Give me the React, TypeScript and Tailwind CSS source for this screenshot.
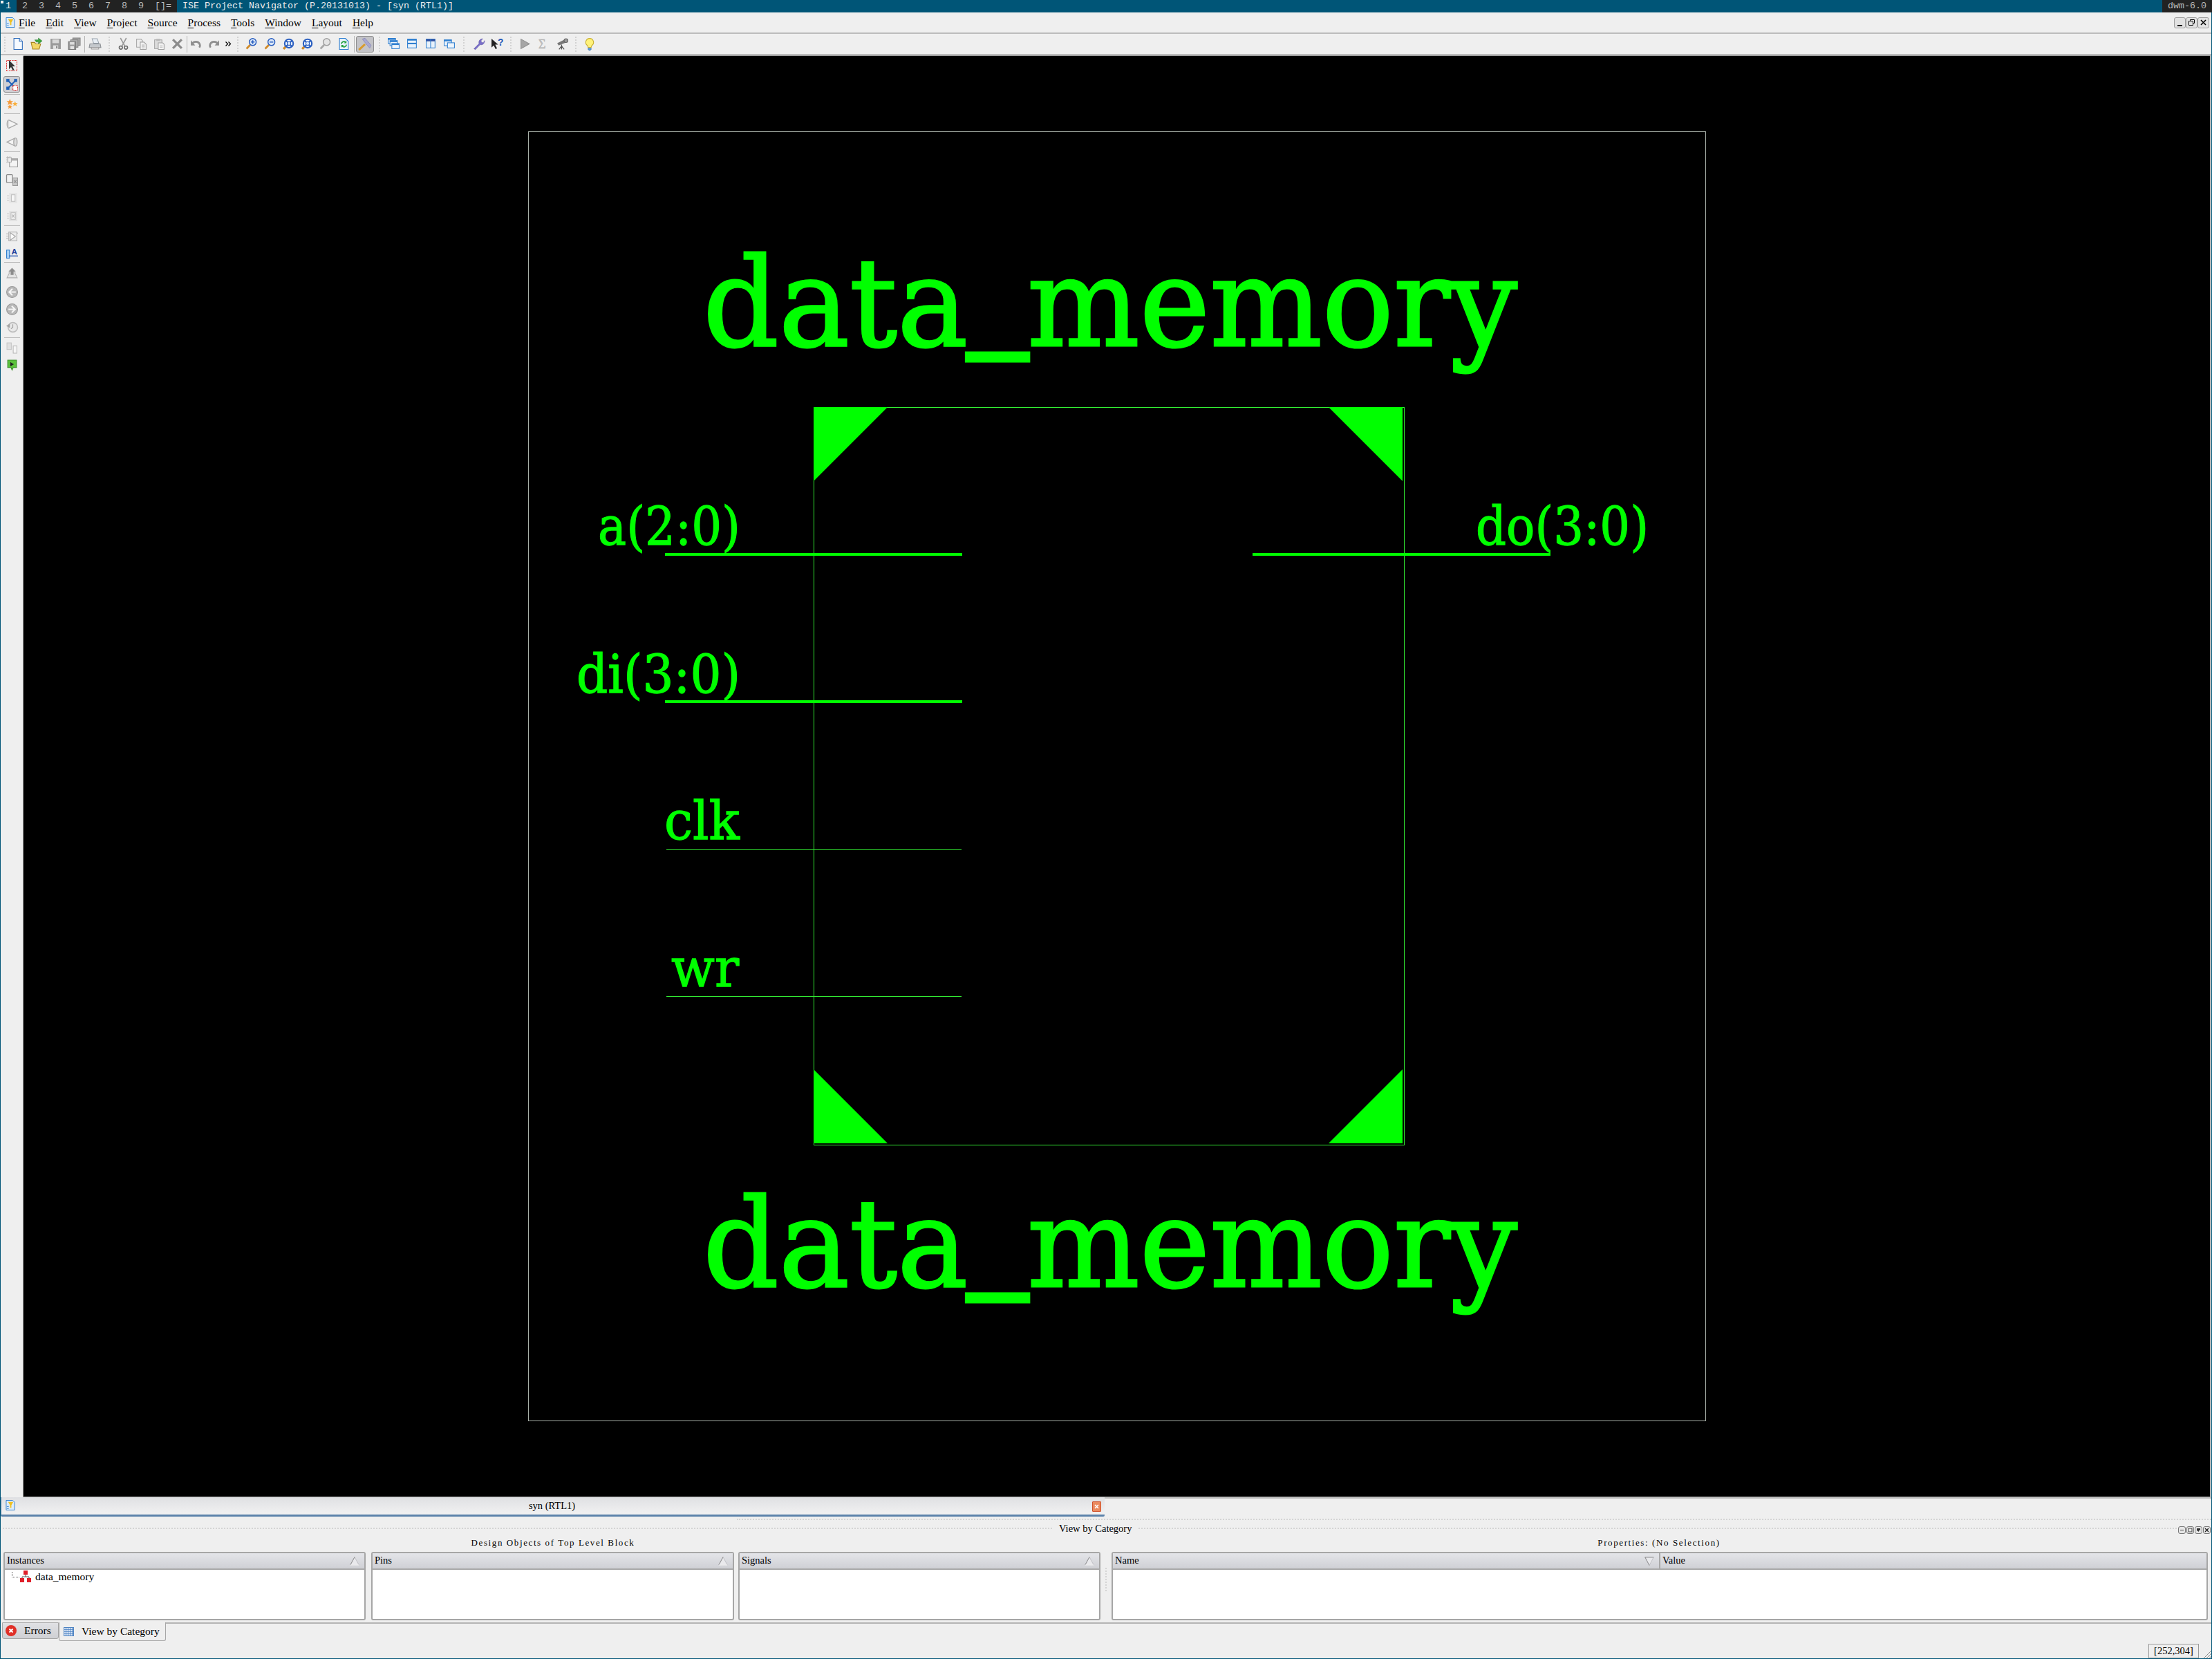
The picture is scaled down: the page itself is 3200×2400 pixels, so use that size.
import React from 'react';

const serif = { fontFamily: '"Liberation Serif", serif' };

const S: React.FC<{ s?: number; children: React.ReactNode }> = ({ s = 17, children }) => (
  <svg width={s} height={s} viewBox="0 0 16 16" className="shrink-0 overflow-visible">
    {children}
  </svg>
);

// top toolbar icons
const IconNew = () => (
  <S><path d="M2 .5h7.500l4 4v11H2z" fill="#f6faff" stroke="#2f6dbb" /><path d="M9.500.5v4h4" fill="#d5e4f7" stroke="#2f6dbb" /></S>
);
const IconOpen = () => (
  <S>
    <path d="M0 6h5l1 2h7l-2 7H2z" fill="#f3d768" stroke="#a8841f" />
    <path d="M5 2.500h5V0l5 4-5 4V5.500H7z" fill="#3ca53c" stroke="#1f7a2a" strokeWidth=".5" />
  </S>
);
const IconSave = () => (
  <S><rect x="1" y="1" width="14" height="14" fill="#9a9a9a" /><rect x="3.500" y="2" width="9" height="5" fill="#d8d8d8" /><rect x="4.500" y="10" width="7" height="5" fill="#e4e4e4" /><rect x="8.500" y="11" width="2" height="3" fill="#888" /></S>
);
const IconSaveAll = () => (
  <S>
    <rect x="6" y="0" width="10" height="10" fill="#a8a8a8" stroke="#808080" />
    <rect x="3" y="2.500" width="10" height="10" fill="#b0b0b0" stroke="#808080" />
    <rect x="0" y="5" width="10" height="10.500" fill="#9a9a9a" stroke="#777" />
    <rect x="2" y="5.500" width="6" height="3.500" fill="#ddd" /><rect x="2.500" y="11" width="5" height="4" fill="#e4e4e4" />
  </S>
);
const IconPrint = () => (
  <S>
    <path d="M4 1h7l2 6H6z" fill="#e8eef4" stroke="#9aa4ae" />
    <path d="M1 8h14l1 5H0z" fill="#c4c8cc" stroke="#8a8e92" />
    <path d="M3 13h10v2H3z" fill="#eee" stroke="#9a9a9a" />
  </S>
);
const IconCut = () => (
  <S>
    <path d="M4 0l6 11M12 0L6 11" stroke="#9a9a9a" strokeWidth="1.500" fill="none" />
    <circle cx="4.500" cy="13" r="2.200" fill="none" stroke="#6a6a6a" strokeWidth="1.500" />
    <circle cx="11.500" cy="13" r="2.200" fill="none" stroke="#6a6a6a" strokeWidth="1.500" />
  </S>
);
const IconCopy = () => (
  <S>
    <path d="M1.500 1.500h6l2 2v9h-8z" fill="#eee" stroke="#a8a8a8" />
    <path d="M6.500 5.500h5l3 3v7h-8z" fill="#f0f0f0" stroke="#a0a0a0" />
    <path d="M8.500 9.500h4M8.500 11.500h4M8.500 13.500h4" stroke="#bbb" />
  </S>
);
const IconPaste = () => (
  <S>
    <rect x="1.500" y="2.500" width="10" height="12" fill="#dcdcdc" stroke="#a8a8a8" />
    <rect x="4" y="1" width="5" height="3" fill="#bbb" />
    <path d="M6.500 6.500h6l2 2v7h-8z" fill="#f2f2f2" stroke="#a0a0a0" />
    <path d="M8.500 10.500h4M8.500 12.500h4" stroke="#bbb" />
  </S>
);
const IconDelete = () => (
  <S><path d="M2 2l12 12M14 2L2 14" stroke="#8c8c8c" strokeWidth="3" /></S>
);
const IconUndo = () => (
  <S>
    <path d="M3 7c4-3.500 10-2 10.500 3 .1 1-.3 2-1 3" fill="none" stroke="#8e8e8e" strokeWidth="2.500" />
    <path d="M1 3v7h6z" fill="#8e8e8e" />
  </S>
);
const IconRedo = () => (
  <S>
    <path d="M13 7C9 3.500 3 5 2.500 10c-.1 1 .3 2 1 3" fill="none" stroke="#8e8e8e" strokeWidth="2.500" />
    <path d="M15 3v7H9z" fill="#8e8e8e" />
  </S>
);
const IconMore = () => (
  <svg width="9" height="7" viewBox="0 0 9 7" className="shrink-0">
    <path d="M.5.5l3 3-3 3M4.500.5l3 3-3 3" fill="none" stroke="#000" strokeWidth="1.300" />
  </svg>
);
const Mag: React.FC<{ glass?: string; ring?: string; handle?: string; mark?: React.ReactNode }> = ({ glass = '#dbe8f8', ring = '#2a5fc0', handle = '#d08a28', mark }) => (
  <S>
    <path d="M6.500 9.500L1.500 14.500" stroke={handle} strokeWidth="2.600" />
    <circle cx="10" cy="5.500" r="4.700" fill={glass} stroke={ring} strokeWidth="1.400" />
    {mark}
  </S>
);
const IconZoomIn = () => <Mag mark={<path d="M7.500 5.500h5M10 3v5" stroke="#2a5fc0" strokeWidth="1.400" />} />;
const IconZoomOut = () => <Mag mark={<path d="M7.500 5.500h5" stroke="#2a5fc0" strokeWidth="1.400" />} />;
const IconZoomFit = () => (
  <S>
    <path d="M4 12l-3 3" stroke="#d08a28" strokeWidth="3" />
    <circle cx="8.500" cy="7.500" r="5.800" fill="#fff" stroke="#2a5fc0" strokeWidth="2" />
    <path d="M4.500 3.500l8 8M12.500 3.500l-8 8" stroke="#2a5fc0" strokeWidth="2" />
    <circle cx="8.500" cy="7.500" r="2.500" fill="#dbe8f8" stroke="#2a5fc0" />
  </S>
);
const IconZoomGray = () => <Mag glass="#e4e4e4" ring="#a0a0a0" handle="#a8a8a8" />;
const IconRefreshDoc = () => (
  <S>
    <path d="M2 .5h8l4 4v11H2z" fill="#e8f2fc" stroke="#2f7fd0" />
    <path d="M4.500 8a3.500 3.500 0 0 1 6-2M11.500 9a3.500 3.500 0 0 1-6 2" fill="none" stroke="#27a243" strokeWidth="1.600" />
    <path d="M11.500 3.500v3.500H8zM4.500 13V9.500H8z" fill="#27a243" />
  </S>
);
const IconHammer = () => (
  <S s={20}>
    <path d="M1 14.500L8 8" stroke="#d89a2c" strokeWidth="2.400" />
    <path d="M5 2l3-1 7 8-1.500 3.500L8 6z" fill="#a8a8d0" stroke="#8484b4" strokeWidth=".6" />
  </S>
);
const IconWinsCascade = () => (
  <S>
    <rect x=".5" y=".5" width="10" height="7" fill="#eef5fc" stroke="#2f7fd0" /><rect x=".5" y=".5" width="10" height="2" fill="#2f7fd0" />
    <rect x="3" y="3.500" width="10" height="7" fill="#eef5fc" stroke="#2f7fd0" /><rect x="3" y="3.500" width="10" height="2" fill="#2f7fd0" />
    <rect x="5.500" y="7.500" width="10" height="7" fill="#eef5fc" stroke="#2f7fd0" /><rect x="5.500" y="7.500" width="10" height="2" fill="#2f7fd0" />
  </S>
);
const IconWinsStack = () => (
  <S>
    <rect x="1.500" y="1.500" width="12" height="12" fill="#e8f2fb" stroke="#2f7fd0" />
    <rect x="1.500" y="1.500" width="12" height="2" fill="#2f7fd0" /><path d="M1.500 7.500h12" stroke="#2f7fd0" strokeWidth="2" />
  </S>
);
const IconWinsSide = () => (
  <S>
    <rect x="1.500" y="1.500" width="12" height="12" fill="#e8f2fb" stroke="#2f7fd0" />
    <rect x="1.500" y="1.500" width="12" height="3" fill="#2f50a0" /><path d="M7.500 1.500v12" stroke="#2f7fd0" />
  </S>
);
const IconWinsTwo = () => (
  <S>
    <rect x=".5" y="2.500" width="10" height="8" fill="#eef5fc" stroke="#2f7fd0" /><rect x=".5" y="2.500" width="10" height="2" fill="#2f7fd0" />
    <rect x="5" y="6.500" width="9.500" height="7" fill="#eef5fc" stroke="#2f7fd0" />
  </S>
);
const IconWrench = () => (
  <S>
    <path d="M1.500 14.500l7-7c-1-3 1-6.500 5-6.500l-2.500 2.800 1 2 2.300.7L16 3.500c.2 4-3 6.500-6 5.500l-6.500 6.800z" fill="#7a70c8" stroke="#5a50a8" strokeWidth=".5" />
  </S>
);
const IconHelp = () => (
  <S>
    <path d="M1 1v12l3-3 2.500 5 2-1-2.500-5h4z" fill="#222" />
    <text x="9.500" y="10.500" fontSize="13" fontWeight="700" fill="#2458b8" style={{ fontFamily: '"Liberation Sans", sans-serif' }}>?</text>
  </S>
);
const IconPlay = () => (
  <S><path d="M2.500 1.500L14 8 2.500 14.500z" fill="#a6a6a6" stroke="#8f8f8f" /></S>
);
const IconSigma = () => (
  <S>
    <text x="1" y="14" fontSize="17" fill="#c4c4c4" stroke="#a8a8a8" strokeWidth=".4" style={serif}>Σ</text>
  </S>
);
const IconScope = () => (
  <S>
    <path d="M1 7l10-5 2 4-10 4z" fill="#777" />
    <circle cx="13" cy="3.500" r="2.600" fill="#999" stroke="#666" />
    <path d="M7 9v3M7 11l-3.500 4.500M7 11l3.500 4.500M7 11v4.500" stroke="#555" strokeWidth="1.200" fill="none" />
  </S>
);
const IconBulb = () => (
  <S s={18}>
    <path d="M8 .5a5 5 0 0 1 3 9c-.7.7-1 1.500-1 2.500H6c0-1-.3-1.800-1-2.500a5 5 0 0 1 3-9z" fill="#fff27a" stroke="#c8b030" />
    <path d="M6 13h4v1.500L8.800 16H7.200L6 14.500z" fill="#5a9ad8" stroke="#3a70a8" strokeWidth=".5" />
  </S>
);
const IconDoc = () => (
  <S s={15}>
    <path d="M1 .5h10l3 3v12H1z" fill="#dcecfa" stroke="#2f7fd0" />
    <path d="M4 3h8L9 8v4H7V8z" fill="#f0c020" />
    <path d="M2 10h3M2 13h3" stroke="#2f7fd0" />
  </S>
);

// left toolbar icons
const IconSelect = () => (
  <S s={16}>
    <rect x=".5" y=".5" width="15" height="15" fill="none" stroke="#e02020" strokeDasharray="1.500 1" />
    <path d="M4 0v13l3-3 2.500 5 2-1-2.500-5h4z" fill="#333" />
  </S>
);
const IconExpand = () => (
  <S s={18}>
    <path d="M4 4l8 8M12 4l-8 8" stroke="#1f5fb8" strokeWidth="1.600" />
    <rect x="1" y="1" width="4" height="4" fill="#1f5fb8" /><rect x="11" y="1" width="4" height="4" fill="#1f5fb8" /><rect x="1" y="11" width="4" height="4" fill="#1f5fb8" />
    <rect x="9.500" y="9.500" width="6" height="6" fill="#fff" stroke="#e02020" strokeDasharray="1.200 .8" />
  </S>
);
const IconStars = () => (
  <S>
    <path d="M5 1l1.200 3H9.500L7 6.200 8 9.500 5 7.600 2 9.500l1-3.300L.5 4h3.300zM5 8l1 2.300h2.500L6.600 12l.7 2.700L5 13.200 2.700 14.700l.7-2.700L1.500 10.300H4z" fill="#f59a38" />
    <path d="M12 4l1 2.500h2.700l-2.100 1.700.8 2.800L12 9.400 9.600 11l.8-2.800-2.100-1.700H11z" fill="#f8b040" />
  </S>
);
const IconGateR = () => (
  <S>
    <ellipse cx="3.500" cy="8" rx="2.300" ry="5.500" fill="#ddd" stroke="#a8a8a8" strokeWidth="1.300" />
    <path d="M4 2.800L15 8 4 13.200" fill="#f4f4f4" stroke="#a8a8a8" strokeWidth="1.300" />
  </S>
);
const IconGateL = () => (
  <S>
    <path d="M12 2.800L1 8 12 13.200" fill="#f4f4f4" stroke="#a8a8a8" strokeWidth="1.300" />
    <ellipse cx="12.500" cy="8" rx="2.300" ry="5.500" fill="#ddd" stroke="#a8a8a8" strokeWidth="1.300" />
  </S>
);
const IconChipWin = () => (
  <S>
    <rect x="4.500" y="3.500" width="11" height="11" fill="#f4f4f4" stroke="#999" /><rect x="4.500" y="3.500" width="11" height="2.500" fill="#aaa" />
    <path d="M0 2h4M0 5h4M0 8h4M2 0v2M5 0v2" stroke="#b4b4b4" /><rect x="2" y="2" width="5" height="6" fill="#eee" stroke="#aaa" />
  </S>
);
const IconBoxes = () => (
  <S>
    <rect x=".5" y=".5" width="8" height="11" rx="1" fill="#f2f2f2" stroke="#8a8a8a" strokeWidth="1.200" />
    <rect x="9" y="5" width="6.500" height="10.500" fill="#c8c8c8" stroke="#9a9a9a" />
    <path d="M10.500 8l3.500 4M14 8l-3.500 4" stroke="#888" />
  </S>
);
const IconPinsA = () => (
  <S>
    <rect x="4" y="1" width="11" height="14" fill="#e6e6e6" />
    <rect x="7" y="3.500" width="5" height="9" fill="#f6f6f6" stroke="#c0c0c0" />
    <path d="M1 5h3M1 8h3M1 11h3" stroke="#c4c4c4" />
  </S>
);
const IconPinsB = () => (
  <S>
    <rect x="4" y="1" width="11" height="14" fill="#e2e2e2" />
    <rect x="6.500" y="3.500" width="6" height="9" fill="#f2f2f2" stroke="#c0c0c0" />
    <path d="M8 6l3 4M11 6l-3 4" stroke="#b4b4b4" />
    <path d="M1 5h3M1 8h3M1 11h3" stroke="#c4c4c4" />
  </S>
);
const IconBuf = () => (
  <S>
    <rect x="3.500" y="2.500" width="11" height="12" fill="#ececec" stroke="#b0b0b0" />
    <path d="M5.500 3.500l7 5-7 5z" fill="#fafafa" stroke="#a4a4a4" />
    <path d="M0 5h3M0 8h3M0 11h3M14 4h2" stroke="#b4b4b4" />
  </S>
);
const IconTextA = () => (
  <S>
    <rect x=".5" y="4.500" width="4" height="11" fill="#a8d0f4" stroke="#2f7fd0" />
    <path d="M4 12.500h12" stroke="#1f4fb0" strokeWidth="1.200" />
    <text x="7" y="10.500" fontSize="11" fontWeight="700" fill="#1f3f9c" style={{ fontFamily: '"Liberation Sans", sans-serif' }}>A</text>
  </S>
);
const IconUpHouse = () => (
  <S>
    <path d="M8 1l4 4v3l3 6H1l3-6V5z" fill="#e4e4e4" stroke="#b0b0b0" />
    <path d="M8 1l4 4.500h-2V10H6V5.500H4z" fill="#8c8c8c" />
  </S>
);
const Round: React.FC<{ dir: 'l' | 'r' }> = ({ dir }) => (
  <S>
    <circle cx="8" cy="8" r="7.500" fill="#b8b8b8" stroke="#9a9a9a" />
    <path d={dir === 'l' ? 'M8.500 3.500L4 8l4.500 4.500M4.500 8H13' : 'M7.500 3.500L12 8l-4.500 4.500M11.500 8H3'} fill="none" stroke="#f4f4f4" strokeWidth="2" />
  </S>
);
const IconClock = () => (
  <S>
    <circle cx="9" cy="8" r="6.500" fill="#e8e8e8" stroke="#bdbdbd" strokeWidth="1.500" />
    <path d="M9 4v4l-2.500 2" stroke="#999" fill="none" />
    <path d="M0 6l5-3v6z" fill="#a4a4a4" />
  </S>
);
const IconTwoBoxes = () => (
  <S>
    <rect x="1" y="1" width="6" height="9" fill="#e0e0e0" stroke="#c8c8c8" />
    <rect x="9.500" y="5" width="5" height="10" fill="#f6f6f6" stroke="#b8b8b8" />
  </S>
);
const IconPinGreen = () => (
  <S>
    <path d="M2 1h12v10H9.500L8 14.500 6.500 11H2z" fill="#5cc23c" stroke="#3a8f28" />
    <path d="M5.500 3.500l5 3-5 3z" fill="#222" />
  </S>
);

// little widgets
const Grip: React.FC<{ className: string }> = ({ className }) => (
  <div className={`flex h-full shrink-0 items-center justify-center ${className}`}>
    <div className="h-[22px] w-0 border-l-2 border-dotted border-[#d2d2d2]" />
  </div>
);
const VSep: React.FC<{ className: string }> = ({ className }) => (
  <div className={`flex h-full shrink-0 items-center justify-center ${className}`}>
    <div className="h-[24px] w-px bg-[#b4b4b4]" />
  </div>
);
const T: React.FC<{ className?: string; children: React.ReactNode }> = ({ className = 'w-[27px]', children }) => (
  <div className={`flex h-full shrink-0 items-center justify-center ${className}`}>{children}</div>
);
const L: React.FC<{ className?: string; children?: React.ReactNode }> = ({ className = 'h-[26px]', children }) => (
  <div className={`flex w-full shrink-0 items-center justify-center ${className}`}>{children}</div>
);
const LSep: React.FC<{ className?: string }> = ({ className = 'h-[3px]' }) => (
  <div className={`flex w-full shrink-0 items-center justify-center ${className}`}>
    <div className="h-px w-[23px] bg-[#b8b8b8]" />
  </div>
);
const SortUp = () => (
  <svg width="14" height="13" viewBox="0 0 14 13" className="shrink-0"><path d="M7 .5L.8 12h12.400z" fill="#e9e9ec" stroke="#b8b8bc" strokeWidth=".8" /><path d="M7 .5L.8 12" stroke="#808080" fill="none" strokeWidth=".8" /><path d="M.8 12h12.400" stroke="#fff" /></svg>
);
const SortDown = () => (
  <svg width="14" height="13" viewBox="0 0 14 13" className="shrink-0"><path d="M.8.800h12.400L7 12.500z" fill="#e9e9ec" stroke="#b8b8bc" strokeWidth=".8" /><path d="M.8.800h12.400M.8.800L7 12.500" stroke="#808080" fill="none" strokeWidth=".8" /></svg>
);
const Header: React.FC<{ className?: string; children: React.ReactNode }> = ({ className = '', children }) => (
  <div className={`flex h-[24px] items-center justify-between border-b-2 border-[#a8a8a8] bg-gradient-to-b from-[#e4e5e9] to-[#cfd0d5] pl-[3px] pr-[7px] text-[14.500px] text-black ${className}`}>
    {children}
  </div>
);
const Box: React.FC<{ className: string; children: React.ReactNode }> = ({ className, children }) => (
  <div className={`h-[99px] shrink-0 overflow-hidden rounded-[3px] border-2 border-[#a6a6a6] bg-white ${className}`}>{children}</div>
);
const DockBtn: React.FC<{ children: React.ReactNode }> = ({ children }) => (
  <div className="flex h-[11px] w-[11px] items-center justify-center rounded-[3px] border border-[#777] bg-[#e6e6e6]">
    <svg width="7" height="7" viewBox="0 0 7 7">{children}</svg>
  </div>
);

const menus = [['F', 'ile'], ['E', 'dit'], ['V', 'iew'], ['P', 'roject'], ['S', 'ource'], ['P', 'rocess'], ['T', 'ools'], ['W', 'indow'], ['L', 'ayout'], ['H', 'elp']];
const tags = ['2', '3', '4', '5', '6', '7', '8', '9', '[]='];

const Title: React.FC<{ y: number }> = ({ y }) => (
  <text x="1017" y={y} textLength="1178" lengthAdjust="spacingAndGlyphs">
    data<tspan dy="-22" strokeWidth="9">_</tspan><tspan dy="22">memory</tspan>
  </text>
);

const Schematic = () => (
  <svg width="3163" height="2083" viewBox="34 81 3163 2083" className="block" style={{ fontFamily: '"DejaVu Serif", serif' }}>
    <rect x="764.500" y="190.500" width="1703" height="1865" fill="none" stroke="#a8b0a8" />
    <g fill="#00ff00" stroke="#00ff00" strokeWidth="3" fontSize="177">
      <Title y={500} />
      <Title y={1861} />
    </g>
    <rect x="1177.500" y="589.500" width="854" height="1067" fill="none" stroke="#33ee33" />
    <g fill="#00ff00">
      <path d="M1177 589h107l-107 107z" />
      <path d="M2029 589h-107l107 107z" />
      <path d="M1177 1654h107l-107-107z" />
      <path d="M2029 1654h-107l107-107z" />
    </g>
    <g fill="#00ff00" stroke="#00ff00" strokeWidth="1.300" fontSize="77">
      <text x="865" y="788" textLength="206" lengthAdjust="spacingAndGlyphs">a(2:0)</text>
      <text x="834" y="1002" textLength="237" lengthAdjust="spacingAndGlyphs">di(3:0)</text>
      <text x="961" y="1214" textLength="109" lengthAdjust="spacingAndGlyphs">clk</text>
      <text x="971" y="1427" textLength="98" lengthAdjust="spacingAndGlyphs">wr</text>
      <text x="2135" y="788" textLength="250" lengthAdjust="spacingAndGlyphs">do(3:0)</text>
    </g>
    <g fill="#00ff00">
      <rect x="962" y="800" width="430" height="4" />
      <rect x="962" y="1013" width="430" height="4" />
      <rect x="1812" y="800" width="431" height="4" />
    </g>
    <g fill="#33ee33">
      <rect x="964" y="1228" width="427" height="1" />
      <rect x="964" y="1441" width="427" height="1" />
    </g>
  </svg>
);

export default function App() {
  return (
    <div className="flex h-[2400px] w-[3200px] flex-col overflow-hidden bg-[#005577]" style={serif}>
      {/* dwm bar */}
      <div className="flex h-[18px] shrink-0 items-center text-[13.330px] leading-[18px]" style={{ fontFamily: '"Liberation Mono", monospace' }}>
        <div className="relative w-[24px] text-center text-[#eeeeee]">
          <span className="absolute left-px top-px size-[4px] bg-[#eeeeee]" />1
        </div>
        <div className="flex h-full bg-[#222222] text-[#bbbbbb]">
          {tags.map((t) => (
            <div key={t} className="px-[8px]">{t}</div>
          ))}
        </div>
        <div className="flex-1 pl-[8px] text-[#eeeeee]">ISE Project Navigator (P.20131013) - [syn (RTL1)]</div>
        <div className="h-full w-[72px] bg-[#222222] pl-[8px] text-[#bbbbbb]">dwm-6.0</div>
      </div>

      <div className="mx-px mb-px flex min-h-0 flex-1 flex-col bg-[#efefef] text-black">
        {/* menu bar */}
        <div className="flex h-[31px] shrink-0 items-center border-b-2 border-[#bcbcbc] text-[15.500px]">
          <div className="flex w-[26px] justify-center pl-[2px]">
            <IconDoc />
          </div>
          <div className="flex gap-[15px]">
            {menus.map(([a, b], i) => (
              <div key={i}><span className="underline decoration-1 underline-offset-2">{a}</span>{b}</div>
            ))}
          </div>
          <div className="ml-auto mr-[3px] flex">
            <div className="flex h-[16px] w-[17px] items-end justify-center rounded-[3px] border border-[#9e9e9e] bg-[#e2e2e2] pb-[2px]"><div className="h-[2px] w-[7px] bg-black" /></div>
            <div className="flex h-[16px] w-[17px] items-center justify-center rounded-[3px] border border-[#9e9e9e] bg-[#e2e2e2]">
              <svg width="9" height="9" viewBox="0 0 9 9"><path d="M2.500 2.500v-2h6v5h-2M.5 2.500h6v6h-6z" fill="none" stroke="#000" /></svg>
            </div>
            <div className="flex h-[16px] w-[17px] items-center justify-center rounded-[3px] border border-[#9e9e9e] bg-[#e2e2e2]">
              <svg width="9" height="9" viewBox="0 0 9 9"><path d="M1 1l7 7M8 1L1 8" stroke="#000" strokeWidth="1.600" /></svg>
            </div>
          </div>
        </div>

        {/* main toolbar */}
        <div className="flex h-[31px] shrink-0 items-center border-b-2 border-[#bcbcbc]">
          <Grip className="w-[11.500px]" />
          <T><IconNew /></T><T><IconOpen /></T><T><IconSave /></T><T><IconSaveAll /></T>
          <VSep className="w-[3px]" />
          <T><IconPrint /></T>
          <Grip className="w-[14px]" />
          <T><IconCut /></T><T className="w-[26px]"><IconCopy /></T><T className="w-[26px]"><IconPaste /></T><T className="w-[26px]"><IconDelete /></T>
          <VSep className="w-px" />
          <T className="w-[26px]"><IconUndo /></T><T className="w-[25px]"><IconRedo /></T><T className="w-[17px]"><IconMore /></T>
          <Grip className="w-[11px]" />
          <T><IconZoomIn /></T><T><IconZoomOut /></T><T><IconZoomFit /></T><T><IconZoomFit /></T><T className="w-[26px]"><IconZoomGray /></T><T className="w-[28px]"><IconRefreshDoc /></T>
          <VSep className="w-px" />
          <T className="w-[30px]">
            <div className="flex h-[24px] w-[26px] items-center justify-center rounded-[3px] border border-[#8e8e8e] bg-[#c4c4c8]"><IconHammer /></div>
          </T>
          <Grip className="w-[13px]" />
          <T><IconWinsCascade /></T><T><IconWinsStack /></T><T><IconWinsSide /></T><T><IconWinsTwo /></T>
          <Grip className="w-[15px]" />
          <T><IconWrench /></T><T className="w-[26px]"><IconHelp /></T>
          <Grip className="w-[14px]" />
          <T><IconPlay /></T><T><IconSigma /></T><T><IconScope /></T>
          <Grip className="w-[13px]" />
          <T><IconBulb /></T>
        </div>

        {/* tools + canvas */}
        <div className="flex min-h-0 flex-1">
          <div className="flex w-[32px] shrink-0 flex-col pt-[2px]">
            <L><IconSelect /></L>
            <L className="h-[28px]">
              <div className="flex h-[24px] w-[24px] items-center justify-center rounded-[3px] border border-[#8e8e8e] bg-[#cfcfd4]"><IconExpand /></div>
            </L>
            <LSep className="h-px" />
            <L><IconStars /></L>
            <LSep />
            <L><IconGateR /></L><L><IconGateL /></L>
            <LSep />
            <L><IconChipWin /></L><L><IconBoxes /></L><L><IconPinsA /></L><L><IconPinsB /></L>
            <LSep />
            <L><IconBuf /></L>
            <L className="h-[22px]"><IconTextA /></L>
            <LSep className="h-[6px]" />
            <L><IconUpHouse /></L>
            <L className="h-[28px]"><Round dir="l" /></L>
            <L className="h-[22px]"><Round dir="r" /></L>
            <L className="h-[30px]"><IconClock /></L>
            <LSep className="h-px" />
            <L className="h-[28px]"><IconTwoBoxes /></L>
            <L className="h-[22px]"><IconPinGreen /></L>
          </div>
          <div className="mr-px min-w-0 flex-1 overflow-hidden rounded-tl-[2px] border border-[#9a9a9a] bg-black">
            <Schematic />
          </div>
        </div>

        {/* document tab strip */}
        <div className="flex h-[29px] shrink-0">
          <div className="relative flex h-[28px] w-[1597px] shrink-0 items-center justify-center rounded-bl-[2px] rounded-br-[2px] border-b-[3px] border-l border-[#5c82aa] border-r-[#8a8a8a] bg-gradient-to-b from-[#dfe0e3] to-[#f2f2f2] text-[14.500px]">
            <div className="absolute left-[6px] top-[4px]">
              <IconDoc />
            </div>
            <div className="pr-[3px]">syn (RTL1)</div>
            <div className="absolute right-[5px] top-[6px] flex h-[15px] w-[13px] items-center justify-center rounded-[1px] border border-[#d0502a] bg-[#ea8a5e]">
              <svg width="7" height="7" viewBox="0 0 7 7"><path d="M1 1l5 5M6 1L1 6" stroke="#fff" strokeWidth="1.700" /></svg>
            </div>
          </div>
          <div className="h-[2px] flex-1 border-t-2 border-[#c0c0c0]" />
        </div>

        {/* dock handles */}
        <div className="h-[8px] shrink-0 pl-[1065px] pt-[2px]">
          <div className="border-t-2 border-dotted border-[#d4d4d4]" />
        </div>
        <div className="flex h-[16px] shrink-0 items-center text-[14.500px] leading-none">
          <div className="ml-[3px] w-[1518px] shrink-0 border-t-2 border-dotted border-[#d4d4d4]" />
          <div className="px-[10px]">View by Category</div>
          <div className="flex-1 border-t-2 border-dotted border-[#d4d4d4]" />
          <div className="mr-[1px] flex gap-[1px] pl-[2px] pt-[5px]">
            <DockBtn><path d="M1 3.500h5" stroke="#444" /></DockBtn>
            <DockBtn><rect x="1" y="1" width="5" height="5" fill="none" stroke="#444" /></DockBtn>
            <DockBtn><path d="M1 1h5v3H4v2L1 4z" fill="#333" /></DockBtn>
            <DockBtn><path d="M1 1l5 5M6 1L1 6" stroke="#222" strokeWidth="1.300" /></DockBtn>
          </div>
        </div>

        {/* panel titles */}
        <div className="flex h-[26px] shrink-0 pt-[3px] text-[13px] tracking-[1.600px]">
          <div className="w-[1600px] pr-[2px] text-center">Design Objects of Top Level Block</div>
          <div className="flex-1 text-center">Properties: (No Selection)</div>
        </div>

        {/* tables */}
        <div className="flex h-[99px] shrink-0 pl-[4px]">
          <Box className="w-[524px]">
            <Header>Instances<SortUp /></Header>
            <div className="flex h-[19px] items-center pl-[10px] text-[15.500px]">
              <div className="mb-[5px] h-[8px] w-[11px] border-b border-l border-dotted border-[#555]" />
              <svg width="16" height="17" viewBox="0 0 16 17" className="ml-px shrink-0">
                <path d="M8 5v4M3 11V9h10v2" stroke="#555" fill="none" />
                <rect x="5" y="0" width="6" height="6" fill="#e0202a" />
                <rect x="0" y="11" width="6" height="6" fill="#e0202a" />
                <rect x="10" y="11" width="6" height="6" fill="#e0202a" />
              </svg>
              <span className="ml-[6px]">data_memory</span>
            </div>
          </Box>
          <Box className="ml-[8px] w-[525px]">
            <Header>Pins<SortUp /></Header>
          </Box>
          <Box className="ml-[6px] w-[524px]">
            <Header>Signals<SortUp /></Header>
          </Box>
          <div className="flex w-[16px] shrink-0 items-center justify-center pb-[20px]">
            <div className="h-[34px] w-0 border-l-2 border-dotted border-[#d4d4d4]" />
          </div>
          <Box className="w-[1586px]">
            <div className="flex">
              <Header className="w-[792px] border-r-2">Name<SortDown /></Header>
              <Header className="flex-1">Value</Header>
            </div>
          </Box>
        </div>

        {/* bottom tabs */}
        <div className="mt-[3px] flex h-[27px] shrink-0">
          <div className="mb-[3px] ml-[2px] flex h-[24px] w-[82px] shrink-0 items-center rounded-b-[3px] border border-[#a6a6a6] bg-gradient-to-b from-[#e0e1e4] to-[#cfd0d4] pl-[4px] text-[15.500px]">
            <div className="flex size-[16px] items-center justify-center rounded-full bg-[#e03028]">
              <svg width="8" height="8" viewBox="0 0 8 8"><path d="M1.500 1.500l5 5M6.500 1.500l-5 5" stroke="#fff" strokeWidth="2" /></svg>
            </div>
            <span className="ml-[11px]">Errors</span>
          </div>
          <div className="flex h-[27px] w-[155px] shrink-0 items-center rounded-b-[3px] border-x border-b border-[#a6a6a6] pl-[6px] text-[15.500px]">
            <svg width="15" height="13" viewBox="0 0 15 13" className="shrink-0">
              <rect x=".5" y=".5" width="14" height="12" fill="#d4e2f4" stroke="#4a80c0" />
              <path d="M3.500 0v13M6.500 0v13M9.500 0v13M12.500 0v13M0 3.500h15M0 6.500h15M0 9.500h15" stroke="#4a80c0" strokeWidth=".8" />
            </svg>
            <span className="ml-[11px]">View by Category</span>
          </div>
          <div className="h-0 flex-1 border-t-2 border-[#b4b4b4]" />
        </div>

        {/* status */}
        <div className="relative flex h-[25px] shrink-0 justify-end pt-[4px]">
          <div className="mr-[18px] flex h-[21px] w-[73px] items-center justify-center border border-[#9a9a9a] text-[14.500px]">[252,304]</div>
          <svg width="12" height="12" viewBox="0 0 12 12" className="absolute bottom-0 right-0">
            <path d="M12 1L1 12M12 5l-7 7M12 9l-3 3" stroke="#8a8a8a" />
          </svg>
        </div>
      </div>
    </div>
  );
}
